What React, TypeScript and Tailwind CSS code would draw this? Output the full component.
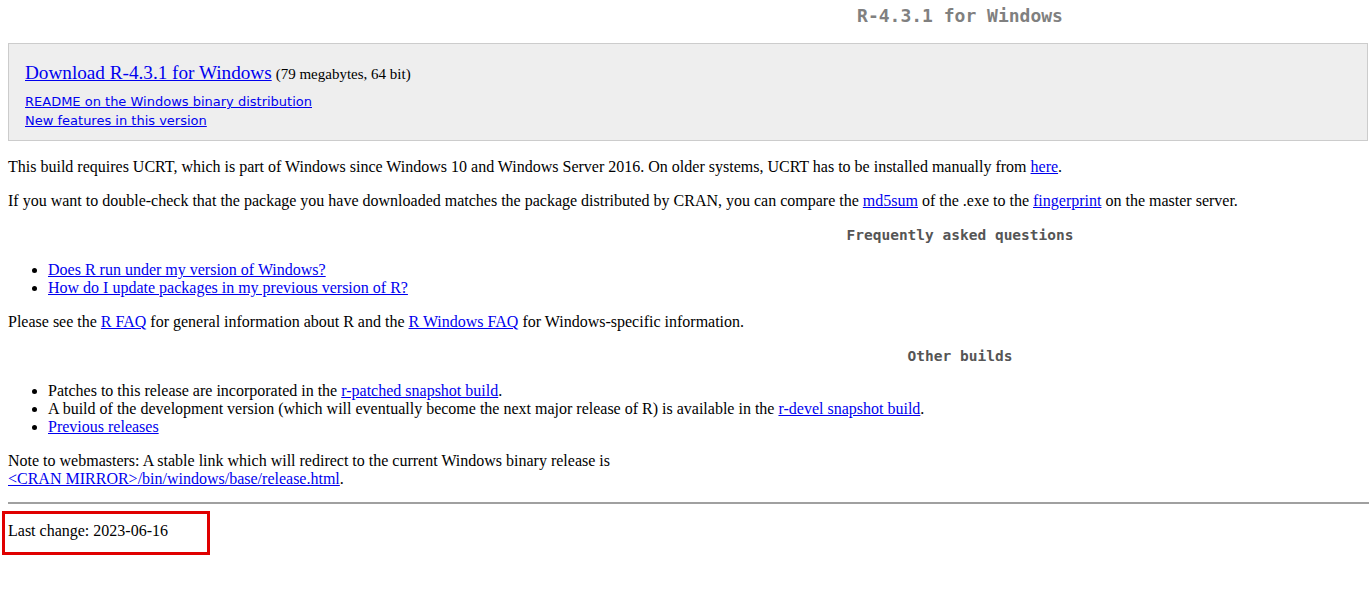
import React from 'react'

const serif = 'font-["Liberation_Serif",serif]'
const mono = 'font-["DejaVu_Sans_Mono","Liberation_Mono",monospace]'
const link = 'text-[#0000ee] underline'

export default function App() {
  return (
    <div className={`${serif} text-[16px] leading-[18px] text-black bg-white min-h-[609px] overflow-hidden pl-[8px]`}>
      {/* Title */}
      <h1 className={`${mono} font-bold text-[18px] leading-[21px] text-[#808080] pt-[5px] pl-[543px] text-center`}>
        R-4.3.1 for Windows
      </h1>

      {/* Download box */}
      <div className="mt-[17px] border border-[#cccccc] bg-[#eeeeee] pt-[17px] pb-[10px] pl-[16px] mr-[1px]">
        <p className="leading-[24px]">
          <a className={`${link} text-[19.2px]`}>Download R-4.3.1 for Windows</a>{' '}
          <span className="text-[15px]">(79 megabytes, 64 bit)</span>
        </p>
        <div className='mt-[6px] font-["DejaVu_Sans",sans-serif] text-[13px] leading-[19px]'>
          <p><a className={link}>README on the Windows binary distribution</a></p>
          <p><a className={link}>New features in this version</a></p>
        </div>
      </div>

      <p className="mt-[17px]">
        This build requires UCRT, which is part of Windows since Windows 10 and Windows Server 2016. On older systems, UCRT has to be installed manually from{' '}
        <a className={link}>here</a>.
      </p>
      <p className="mt-[16px]">
        If you want to double-check that the package you have downloaded matches the package distributed by CRAN, you can compare the{' '}
        <a className={link}>md5sum</a> of the .exe to the <a className={link}>fingerprint</a> on the master server.
      </p>

      <h2 className={`${mono} font-bold text-[14.5px] leading-[18px] text-[#555555] mt-[16px] pl-[543px] text-center`}>
        Frequently asked questions
      </h2>
      <ul className="list-disc pl-[40px] mt-[17px]">
        <li><a className={link}>Does R run under my version of Windows?</a></li>
        <li><a className={link}>How do I update packages in my previous version of R?</a></li>
      </ul>
      <p className="mt-[16px]">
        Please see the <a className={link}>R FAQ</a> for general information about R and the{' '}
        <a className={link}>R Windows FAQ</a> for Windows-specific information.
      </p>

      <h2 className={`${mono} font-bold text-[14.5px] leading-[18px] text-[#555555] mt-[16px] pl-[543px] text-center`}>
        Other builds
      </h2>
      <ul className="list-disc pl-[40px] mt-[17px]">
        <li>
          Patches to this release are incorporated in the <a className={link}>r-patched snapshot build</a>.
        </li>
        <li>
          A build of the development version (which will eventually become the next major release of R) is available in the{' '}
          <a className={link}>r-devel snapshot build</a>.
        </li>
        <li><a className={link}>Previous releases</a></li>
      </ul>

      <p className="mt-[16px]">
        Note to webmasters: A stable link which will redirect to the current Windows binary release is
        <br />
        <a className={link}>&lt;CRAN MIRROR&gt;/bin/windows/base/release.html</a>.
      </p>

      <hr className="mt-[14px] border-t-2 border-[#a0a0a0]" />

      <div className="mt-[7px] -ml-[6px] w-[208px] h-[44px] border-[3px] border-[#e00000] pt-[8px] pl-[3px]">
        Last change: 2023-06-16
      </div>
    </div>
  )
}
